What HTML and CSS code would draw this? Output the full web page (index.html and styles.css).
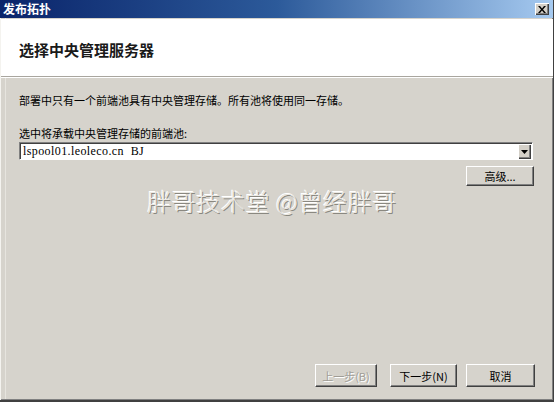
FILE: index.html
```html
<!DOCTYPE html>
<html lang="zh">
<head>
<meta charset="utf-8">
<title>发布拓扑</title>
<link rel="stylesheet" href="styles.css">
</head>
<body>
<div class="window">
  <div class="titlebar">
    <span class="title">发布拓扑</span>
    <span class="close">
      <svg width="8" height="7" viewBox="0 0 8 7"><path d="M0 0h2l2 2.5L6 0h2L5 3.5 8 7H6L4 4.5 2 7H0l3-3.5z" fill="#000"/></svg>
    </span>
  </div>
  <div class="header">
    <h1 class="heading">选择中央管理服务器</h1>
  </div>
  <div class="separator"></div>
  <div class="content">
    <p class="desc">部署中只有一个前端池具有中央管理存储。所有池将使用同一存储。</p>
    <p class="label">选中将承载中央管理存储的前端池:</p>
    <div class="combo">
      <span class="combo-text">lspool01.leoleco.cn&nbsp;&nbsp;BJ</span>
      <span class="combo-btn">
        <svg width="7" height="4" viewBox="0 0 7 4"><path d="M0 0h7L3.5 4z" fill="#000"/></svg>
      </span>
    </div>
    <div class="adv-row">
      <span class="btn btn-adv">高级...</span>
    </div>
    <div class="watermark">胖哥技术堂 @曾经胖哥</div>
  </div>
  <div class="footer">
    <span class="btn btn-prev disabled">上一步(B)</span>
    <span class="btn btn-next">下一步(N)</span>
    <span class="btn btn-cancel">取消</span>
  </div>
</div>
</body>
</html>
```
FILE: styles.css
```css
* { box-sizing: border-box; }
html, body { margin: 0; padding: 0; }
body {
  width: 554px;
  height: 402px;
  overflow: hidden;
  font-family: "Noto Sans CJK SC", "Liberation Sans", sans-serif;
  font-size: 11px;
  color: #000;
}
.window {
  width: 554px;
  height: 402px;
  display: flex;
  flex-direction: column;
  background: #d6d3cc;
  border-right: 1px solid #404040;
  border-bottom: 2px solid #404040;
  box-shadow: inset 1px 0 #f4f3ef, inset -1px -1px #808080, inset 5px 0 #d6d3cc, inset 6px 0 #e6e4de;
}
.titlebar {
  height: 18px;
  display: flex;
  align-items: center;
  justify-content: space-between;
  padding: 0 4px 0 3px;
  background: linear-gradient(to right, #0a246a, #2c5a9a 50%, #a6caf0);
}
.title {
  color: #fff;
  font-weight: bold;
  font-size: 12px;
  line-height: 18px;
}
.close {
  width: 14px;
  height: 12px;
  display: flex;
  align-items: center;
  justify-content: center;
  background: #d4d0c8;
  box-shadow: inset 1px 1px #fff, inset -1px -1px #404040, inset -2px -2px #808080;
}
.header {
  height: 57px;
  background: #fff;
  margin-top: 1px;
  margin-left: 1px;
  display: flex;
  align-items: center;
  padding-left: 18px;
  padding-top: 3px;
}
.heading {
  margin: 0;
  font-size: 15px;
  font-weight: bold;
  color: #1a1a1a;
}
.separator {
  height: 2px;
  border-top: 1px solid #a9a69f;
  border-bottom: 1px solid #fff;
  margin-left: 1px;
}
.content {
  padding: 0 20px 0 19px;
  display: flex;
  flex-direction: column;
}
.desc {
  margin: 15px 0 0 0;
  line-height: 14px;
  font-size: 11px;
}
.label {
  margin: 19px 0 0 0;
  line-height: 14px;
  font-size: 11px;
}
.combo {
  margin-top: 2px;
  height: 18px;
  background: #fff;
  display: flex;
  align-items: center;
  justify-content: space-between;
  border-top: 1px solid #808080;
  border-left: 1px solid #808080;
  border-right: 1px solid #fff;
  border-bottom: 1px solid #fff;
  box-shadow: inset 1px 1px #404040;
  padding: 1px 1px 0 3px;
}
.combo-text {
  font-family: "Liberation Serif", serif;
  font-size: 12px;
  letter-spacing: 0.4px;
}
.combo-btn {
  width: 13px;
  height: 15px;
  display: flex;
  align-items: center;
  justify-content: center;
  background: #d4d0c8;
  box-shadow: inset 1px 1px #fff, inset -1px -1px #404040, inset -2px -2px #808080;
}
.adv-row {
  display: flex;
  justify-content: flex-end;
  margin-top: 6px;
}
.btn {
  display: flex;
  align-items: center;
  justify-content: center;
  background: #d6d3cc;
  font-size: 11px;
  color: #000;
  border-top: 1px solid #fff;
  border-left: 1px solid #fff;
  border-right: 1px solid #404040;
  border-bottom: 1px solid #404040;
  box-shadow: inset -1px -1px #808080;
}
.btn-adv {
  width: 68px;
  height: 20px;
  margin-right: -1px;
}
.watermark {
  margin-top: 0;
  text-align: center;
  font-size: 24px;
  font-weight: 300;
  letter-spacing: 0.6px;
  line-height: 30px;
  color: #ebe9e4;
  text-shadow: 1px 1px 0 #8a8880, -1px -1px 0 #fff;
  padding-right: 8px;
}
.footer {
  margin-top: auto;
  display: flex;
  justify-content: flex-end;
  padding: 0 18px 13px 0;
}
.footer .btn { height: 23px; }
.btn-prev { width: 62px; }
.btn-next { width: 67px; margin-left: 13px; }
.btn-cancel { width: 69px; margin-left: 9px; }
.disabled {
  color: #a09d96;
  text-shadow: 1px 1px 0 #fff;
}
```
